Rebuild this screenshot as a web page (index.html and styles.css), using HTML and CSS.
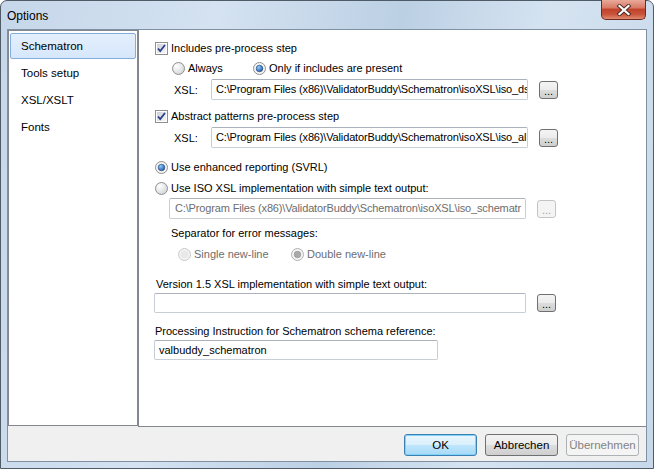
FILE: index.html
```html
<!DOCTYPE html>
<html>
    <head>
        <meta charset="UTF-8">
        <title>Options</title>
        <link rel="stylesheet" href="styles.css">
    </head>
    <body>
        <svg class="defs" width="0" height="0">
            <defs>
                <linearGradient id="boxfill" x1="0" y1="0" x2="1" y2="1">
                    <stop offset="0" stop-color="#cbcfd5"/>
                    <stop offset="1" stop-color="#f7f7f7"/>
                </linearGradient>
                <radialGradient id="radiofill" cx="0.35" cy="0.3" r="0.8">
                    <stop offset="0" stop-color="#ffffff"/>
                    <stop offset="1" stop-color="#cfd2d6"/>
                </radialGradient>
                <radialGradient id="dotfill" cx="0.35" cy="0.3" r="0.8">
                    <stop offset="0" stop-color="#8fd0ff"/>
                    <stop offset="1" stop-color="#1d4f9b"/>
                </radialGradient>
                <symbol id="check" viewBox="0 0 13 13">
                    <rect x="0.5" y="0.5" width="12" height="12" fill="#fff" stroke="#8e8f8f"/>
                    <rect x="2" y="2" width="9" height="9" fill="url(#boxfill)"/>
                    <path d="M3 6.5 L5.2 9 L10 3" fill="none" stroke="#2a3e8c" stroke-width="1.8"/>
                </symbol>
                <symbol id="radio" viewBox="0 0 13 13">
                    <circle cx="6.5" cy="6.5" r="6" fill="url(#radiofill)" stroke="#8e8f8f"/>
                </symbol>
                <symbol id="radio-on" viewBox="0 0 13 13">
                    <circle cx="6.5" cy="6.5" r="6" fill="#f4f4f4" stroke="#8e8f8f"/>
                    <circle cx="6.5" cy="6.5" r="3.3" fill="url(#dotfill)" stroke="#1b3f7a" stroke-width="0.6"/>
                </symbol>
                <symbol id="radio-off-dis" viewBox="0 0 13 13">
                    <circle cx="6.5" cy="6.5" r="6" fill="#f4f4f4" stroke="#c9c9c9"/>
                    <circle cx="6.5" cy="6.5" r="4" fill="#e9e9e9"/>
                </symbol>
                <symbol id="radio-on-dis" viewBox="0 0 13 13">
                    <circle cx="6.5" cy="6.5" r="6" fill="#f4f4f4" stroke="#b1b1b1"/>
                    <circle cx="6.5" cy="6.5" r="3.3" fill="#a9a9a9" stroke="#8f8f8f" stroke-width="0.6"/>
                </symbol>
            </defs>
        </svg>

        <div class="window">
            <div class="titlebar">
                <span class="title">Options</span>
                <div class="close">
                    <svg width="16" height="12" viewBox="0 0 16 12">
                        <path d="M3.5 2 L12.5 10 M12.5 2 L3.5 10" stroke="#4b2a26" stroke-width="4" stroke-linecap="square"/>
                        <path d="M3.5 2 L12.5 10 M12.5 2 L3.5 10" stroke="#ffffff" stroke-width="2.2" stroke-linecap="square"/>
                    </svg>
                </div>
            </div>

            <div class="client">
                <div class="main">
                    <ul class="nav">
                        <li class="selected">Schematron</li>
                        <li>Tools setup</li>
                        <li>XSL/XSLT</li>
                        <li>Fonts</li>
                    </ul>

                    <div class="pane">
                        <div class="row r1">
                            <svg class="ico"><use href="#check"/></svg>
                            <span class="lbl">Includes pre-process step</span>
                        </div>
                        <div class="row r2">
                            <span class="opt w81"><svg class="ico"><use href="#radio"/></svg><span class="lbl">Always</span></span>
                            <span class="opt"><svg class="ico"><use href="#radio-on"/></svg><span class="lbl">Only if includes are present</span></span>
                        </div>
                        <div class="row field r3">
                            <span class="xsl">XSL:</span>
                            <div class="input w317"><span class="val">C:\Program Files (x86)\ValidatorBuddy\Schematron\isoXSL\iso_ds</span></div>
                            <button class="dots">...</button>
                        </div>
                        <div class="row r4">
                            <svg class="ico"><use href="#check"/></svg>
                            <span class="lbl">Abstract patterns pre-process step</span>
                        </div>
                        <div class="row field r5">
                            <span class="xsl">XSL:</span>
                            <div class="input w317"><span class="val">C:\Program Files (x86)\ValidatorBuddy\Schematron\isoXSL\iso_al</span></div>
                            <button class="dots">...</button>
                        </div>
                        <div class="row r6">
                            <svg class="ico"><use href="#radio-on"/></svg>
                            <span class="lbl">Use enhanced reporting (SVRL)</span>
                        </div>
                        <div class="row r7">
                            <svg class="ico"><use href="#radio"/></svg>
                            <span class="lbl">Use ISO XSL implementation with simple text output:</span>
                        </div>
                        <div class="row field r8">
                            <div class="input disabled w357"><span class="val">C:\Program Files (x86)\ValidatorBuddy\Schematron\isoXSL\iso_schematr</span></div>
                            <button class="dots" disabled>...</button>
                        </div>
                        <div class="row r9">
                            <span>Separator for error messages:</span>
                        </div>
                        <div class="row r10 muted">
                            <span class="opt w113"><svg class="ico"><use href="#radio-off-dis"/></svg><span class="lbl">Single new-line</span></span>
                            <span class="opt"><svg class="ico"><use href="#radio-on-dis"/></svg><span class="lbl">Double new-line</span></span>
                        </div>
                        <div class="row r11">
                            <span>Version 1.5 XSL implementation with simple text output:</span>
                        </div>
                        <div class="row field r12">
                            <div class="input w372"></div>
                            <button class="dots">...</button>
                        </div>
                        <div class="row r13">
                            <span>Processing Instruction for Schematron schema reference:</span>
                        </div>
                        <div class="row field r14">
                            <div class="input w284">valbuddy_schematron</div>
                        </div>
                    </div>
                </div>

                <div class="footer">
                    <button class="btn default">OK</button>
                    <button class="btn">Abbrechen</button>
                    <button class="btn" disabled>Übernehmen</button>
                </div>
            </div>
        </div>
    </body>
</html>
```

FILE: styles.css
```css
body {
    margin: 0;
    font-family: "Liberation Sans", Arial, sans-serif;
    font-size: 11px;
    color: #000;
}
.defs {
    position: absolute;
    width: 0;
    height: 0;
}
.window {
    width: 654px;
    height: 469px;
    box-sizing: border-box;
    border: 1px solid #505b68;
    border-radius: 7px 7px 0 0;
    padding: 0 6px 6px;
    display: flex;
    flex-direction: column;
    background: linear-gradient(100deg, #c6d7ea 0%, #d4e2f1 30%, #bcd0e4 55%, #d5e3f1 75%, #c7d8ea 100%);
}
.titlebar {
    height: 28px;
    display: flex;
    align-items: center;
    position: relative;
    margin: 0 -6px;
    padding-left: 6px;
}
.title {
    font-size: 12px;
    color: #000;
    padding-top: 2px;
}
.close {
    position: absolute;
    right: 7px;
    top: -1px;
    width: 45px;
    height: 20px;
    box-sizing: border-box;
    border: 1px solid #6b2b23;
    border-top: none;
    border-radius: 0 0 5px 5px;
    background: linear-gradient(#e9a99a 0%, #d97b66 40%, #c2432c 50%, #c9533b 75%, #e08a6f 100%);
    display: flex;
    align-items: center;
    justify-content: center;
}
.client {
    flex: 1;
    border: 1px solid #7f90a3;
    background: #f0f0f0;
    display: flex;
    flex-direction: column;
}
.main {
    display: flex;
    height: 397px;
    align-items: flex-start;
}
.nav {
    list-style: none;
    margin: 0;
    width: 130px;
    height: 396px;
    box-sizing: border-box;
    border: 1px solid #828790;
    background: #fff;
    padding: 2px 1px;
}
.nav li {
    height: 26px;
    box-sizing: border-box;
    margin-bottom: 1px;
    padding-left: 10px;
    display: flex;
    align-items: center;
    font-size: 11.5px;
    border: 1px solid transparent;
    border-radius: 2px;
}
.nav li.selected {
    background: linear-gradient(#e4effc, #d6e7fb);
    border-color: #84acdd;
}
.pane {
    flex: 1;
    height: 397px;
    box-sizing: border-box;
    background: #fff;
    border-left: 1px solid #828790;
    border-bottom: 1px solid #828790;
    padding-left: 16px;
}
.row {
    display: flex;
    align-items: center;
    height: 16px;
}
.row.field {
    height: 21px;
}
.ico {
    width: 13px;
    height: 13px;
    flex: none;
}
.lbl {
    margin-left: 3px;
}
.opt {
    display: flex;
    align-items: center;
}
.w81 { width: 81px; }
.w113 { width: 113px; }
.xsl {
    width: 37px;
}
.input {
    height: 21px;
    box-sizing: border-box;
    border: 1px solid #c8ced6;
    border-top-color: #acb2bb;
    border-radius: 2px;
    background: #fff;
    padding: 0 4px;
    line-height: 19px;
    white-space: nowrap;
    overflow: hidden;
}
.input.disabled {
    color: #6d6d6d;
    padding-left: 5px;
}
.val {
    letter-spacing: -0.15px;
}
.w317 { width: 317px; }
.w357 { width: 357px; }
.w372 { width: 372px; height: 20px; }
.w284 { width: 284px; height: 20px; }
.dots {
    margin-left: 11px;
    width: 19px;
    height: 18px;
    padding: 0;
    font-family: inherit;
    font-size: 11px;
    line-height: 18px;
    border: 1px solid #707070;
    border-radius: 3px;
    background: linear-gradient(#f4f4f4 0%, #ebebeb 50%, #dddddd 51%, #cfcfcf 100%);
    color: #000;
}
.dots:disabled {
    border-color: #c2c5c8;
    background: #f4f4f4;
    color: #a0a0a0;
}
.r1 { margin-top: 10px; }
.r2 { margin-top: 4px; padding-left: 17px; }
.r3 { margin-top: 3px; padding-left: 19px; }
.r4 { margin-top: 8px; }
.r5 { margin-top: 3px; padding-left: 19px; }
.r6 { margin-top: 11px; }
.r7 { margin-top: 5px; }
.r8 { margin-top: 2px; padding-left: 14px; }
.r9 { margin-top: 6px; padding-left: 16px; }
.r10 { margin-top: 5px; padding-left: 23px; }
.r11 { margin-top: 14px; padding-left: 1px; }
.r12 { margin-top: 0; margin-left: -1px; height: 20px; }
.r13 { margin-top: 10px; }
.r14 { margin-top: 0; margin-left: -1px; height: 20px; }
.muted {
    color: #6d6d6d;
}
.footer {
    flex: 1;
    display: flex;
    justify-content: flex-end;
    align-items: flex-start;
    gap: 8px;
    padding: 7px 7px 0 0;
}
.btn {
    width: 73px;
    height: 22px;
    padding: 0;
    font-family: inherit;
    font-size: 11.5px;
    border: 1px solid #707070;
    border-radius: 3px;
    background: linear-gradient(#f2f2f2 0%, #ebebeb 50%, #dddddd 51%, #cfcfcf 100%);
    color: #000;
}
.btn.default {
    border-color: #3c7fb1;
    background: linear-gradient(#eaf6fd 0%, #d9f0fc 50%, #bee6fd 51%, #a7d9f5 100%);
    box-shadow: inset 0 0 0 1px #7fd2f8;
}
.btn:disabled {
    border-color: #adb2b5;
    background: #f4f4f4;
    color: #838383;
}
```
